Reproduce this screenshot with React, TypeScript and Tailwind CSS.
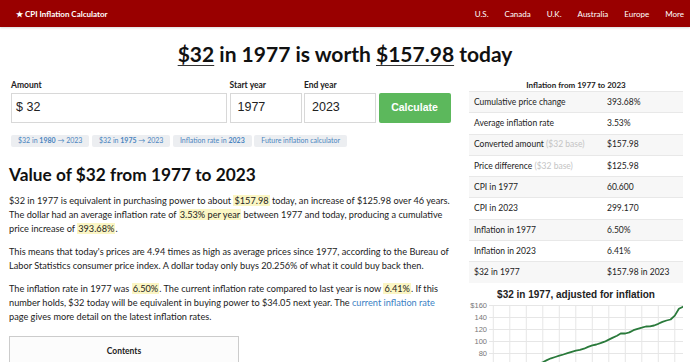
import React from "react"

const cpi: number[] = [
  60.6, 65.2, 72.6, 82.4, 90.9, 96.5, 99.6, 103.9, 107.6, 109.6, 113.6, 118.3, 124.0, 130.7, 136.2, 140.3,
  144.5, 148.2, 152.4, 156.9, 160.5, 163.0, 166.6, 172.2, 177.1, 179.9, 184.0, 188.9, 195.3, 201.6, 207.342,
  215.303, 214.537, 218.056, 224.939, 229.594, 232.957, 236.736, 237.017, 240.007, 245.12, 251.107, 255.657,
  258.811, 270.97, 292.655, 299.17,
]

const rows: { label: string; note?: string; value: string }[] = [
  { label: "Cumulative price change", value: "393.68%" },
  { label: "Average inflation rate", value: "3.53%" },
  { label: "Converted amount", note: "($32 base)", value: "$157.98" },
  { label: "Price difference", note: "($32 base)", value: "$125.98" },
  { label: "CPI in 1977", value: "60.600" },
  { label: "CPI in 2023", value: "299.170" },
  { label: "Inflation in 1977", value: "6.50%" },
  { label: "Inflation in 2023", value: "6.41%" },
  { label: "$32 in 1977", value: "$157.98 in 2023" },
]

function Mark({ children }: { children: React.ReactNode }) {
  return <span className="bg-[#fbf6c4] px-[1px]">{children}</span>
}

function Chart() {
  const top = 3.5
  const left = 24.3
  const right = 214
  const yOf = (v: number) => top + (160 - v) * 0.6
  const xOf = (i: number) => left + (i * (right - left)) / 46
  const pts = cpi.map((c, i) => `${xOf(i).toFixed(1)},${yOf((32 * c) / 60.6).toFixed(1)}`).join(" ")
  const ticks = [160, 140, 120, 100, 80, 60, 40, 20]

  return (
    <svg width="214" height="110" className="block">
      {ticks.map((v) => (
        <g key={v}>
          <line x1={20} x2={right} y1={yOf(v)} y2={yOf(v)} stroke="#e6e6e6" strokeWidth="1" />
          <text
            x={18}
            y={yOf(v) + 2.6}
            textAnchor="end"
            fontSize="7.5"
            fill="#777"
            fontFamily="'Liberation Sans', Arial, sans-serif"
          >
            {v === 160 ? "$160" : v}
          </text>
        </g>
      ))}
      {Array.from({ length: 12 }).map((_, i) => (
        <line key={i} x1={left + i * 16.5} x2={left + i * 16.5} y1={top} y2={110} stroke="#e6e6e6" strokeWidth="1" />
      ))}
      <polyline points={pts} fill="none" stroke="#2a7a3b" strokeWidth="1.8" strokeLinejoin="round" strokeLinecap="round" />
    </svg>
  )
}

export default function App() {
  return (
    <div className="w-[690px] h-[362px] overflow-hidden bg-white text-[#222] font-['Lato','Noto_Sans',sans-serif]">

      {/* HEADER */}
      <div className="h-[27px] bg-[#990000] flex items-center justify-between pl-[16px] pr-[6px] text-white text-[8px] shadow-[0_1px_2px_rgba(0,0,0,0.15)]">
        <div className="font-bold">★ CPI Inflation Calculator</div>
        <nav className="flex gap-4">
          <span>U.S.</span>
          <span>Canada</span>
          <span>U.K.</span>
          <span>Australia</span>
          <span>Europe</span>
          <span>More</span>
        </nav>
      </div>

      {/* TITLE */}
      <h1 className="h-[52px] flex items-center justify-center pt-[2px] text-[21px] font-bold text-[#111]">
        <span>
          <span className="underline decoration-[1px] underline-offset-[3px] decoration-[#333]">$32</span> in 1977 is worth{" "}
          <span className="underline decoration-[1px] underline-offset-[3px] decoration-[#333]">$157.98</span> today
        </span>
      </h1>

      <div className="flex justify-between pl-[9px] pr-[7px]">

        {/* LEFT */}
        <div className="w-[443px] shrink-0">
          <div className="pl-[2px]">
            <div className="grid grid-cols-[216px_72px_72px_72px] gap-x-[2.5px] text-[8.5px] font-bold">
              <div className="h-[14px]">Amount</div>
              <div className="h-[14px]">Start year</div>
              <div className="h-[14px]">End year</div>
              <div />
              <div className="h-[29.5px] border border-[#d8d8d8] flex items-center pl-[4px] text-[12.5px] font-normal font-['Liberation_Sans',Arial,sans-serif]">
                $ 32
              </div>
              <div className="h-[29.5px] border border-[#d8d8d8] flex items-center pl-[7px] text-[12.5px] font-normal font-['Liberation_Sans',Arial,sans-serif]">
                1977
              </div>
              <div className="h-[29.5px] border border-[#d8d8d8] flex items-center pl-[7px] text-[12.5px] font-normal font-['Liberation_Sans',Arial,sans-serif]">
                2023
              </div>
              <div className="h-[29.5px] bg-[#5cb85c] rounded-[2px] flex items-center justify-center text-white text-[10.5px] font-bold font-['Liberation_Sans',Arial,sans-serif]">
                Calculate
              </div>
            </div>

            <div className="flex gap-[2.5px] mt-[12px] text-[7px] text-[#4a85c0]">
              <span className="bg-[#eceef1] rounded-[2px] h-[12px] px-[7px] flex items-center">$32 in&nbsp;<b>1980</b>&nbsp;→ 2023</span>
              <span className="bg-[#eceef1] rounded-[2px] h-[12px] px-[7px] flex items-center">$32 in&nbsp;<b>1975</b>&nbsp;→ 2023</span>
              <span className="bg-[#eceef1] rounded-[2px] h-[12px] px-[7px] flex items-center">Inflation rate in&nbsp;<b>2023</b></span>
              <span className="bg-[#eceef1] rounded-[2px] h-[12px] px-[7px] flex items-center">Future inflation calculator</span>
            </div>
          </div>

          <h2 className="mt-[17px] text-[17.3px] font-bold text-[#111] leading-[22px]">Value of $32 from 1977 to 2023</h2>

          <div className="mt-[8px] text-[9.2px] leading-[14px] space-y-[9px]">
            <p>
              $32 in 1977 is equivalent in purchasing power to about <Mark>$157.98</Mark> today, an increase of $125.98 over 46
              years. The dollar had an average inflation rate of <Mark>3.53% per year</Mark> between 1977 and today, producing
              a cumulative price increase of <Mark>393.68%</Mark>.
            </p>
            <p>
              This means that today's prices are 4.94 times as high as average prices since 1977, according to the Bureau of
              Labor Statistics consumer price index. A dollar today only buys 20.256% of what it could buy back then.
            </p>
            <p>
              The inflation rate in 1977 was <Mark>6.50%</Mark>. The current inflation rate compared to last year is now{" "}
              <Mark>6.41%</Mark>. If this number holds, $32 today will be equivalent in buying power to $34.05 next year. The{" "}
              <span className="text-[#3b7fc4]">current inflation rate</span> page gives more detail on the latest inflation
              rates.
            </p>
          </div>

          <div className="mt-[12px] w-[230px] h-[40px] border border-[#ccc] bg-[#fcfcfc] pt-[8px] text-center text-[8.5px] font-bold">
            Contents
          </div>
        </div>

        {/* RIGHT */}
        <div className="w-[214px] shrink-0">
          <div className="h-[12px] text-center text-[8px] font-bold leading-[12px]">Inflation from 1977 to 2023</div>
          <div className="text-[8.5px]">
            {rows.map((r, i) => (
              <div
                key={r.label}
                className={
                  "h-[21.3px] border-t border-[#e8e8e8] flex items-center pl-[5px] " +
                  (i % 2 === 0 ? "bg-[#f7f7f7]" : "bg-white")
                }
              >
                <div className="w-[133px]">
                  {r.label} {r.note && <span className="text-[#c4c4c4]">{r.note}</span>}
                </div>
                <div>{r.value}</div>
              </div>
            ))}
          </div>

          <div className="mt-[4px] text-center text-[10px] font-bold font-['Liberation_Sans',Arial,sans-serif] text-[#222]">
            $32 in 1977, adjusted for inflation
          </div>
          <Chart />
        </div>

      </div>
    </div>
  )
}
